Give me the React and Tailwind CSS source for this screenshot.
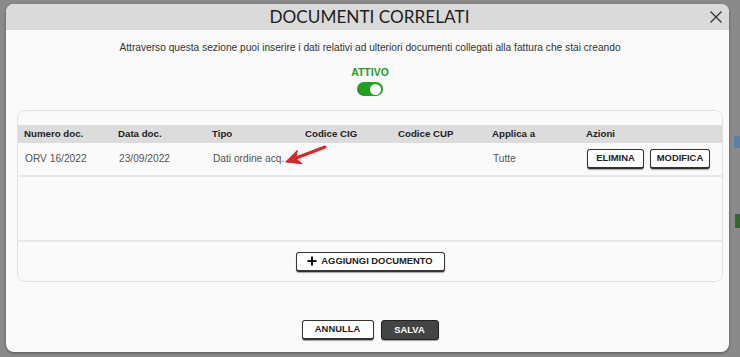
import React, { useState } from 'react';

const cols = ['Numero doc.', 'Data doc.', 'Tipo', 'Codice CIG', 'Codice CUP', 'Applica a', 'Azioni'];

const Btn = ({ children, className = '' }) => (
  <button
    className={`h-[20px] whitespace-nowrap rounded-[3px] border border-[#333] border-b-2 bg-white px-1 text-[9.4px] font-bold text-[#222] shadow-[0_1px_1px_rgba(0,0,0,0.35)] ${className}`}
  >
    {children}
  </button>
);

const App = () => {
  const [active, setActive] = useState(true);

  return (
    <div
      className="relative h-[357px] w-[740px] overflow-hidden bg-[#8a8a8a] pl-[6px] pt-[4px]"
      style={{ fontFamily: '"Liberation Sans", Arial, sans-serif' }}
    >
      {/* page fragments behind the overlay */}
      <div className="absolute right-0 top-[136px] h-[12px] w-[6px] bg-[#5d7fa6]" />
      <div className="absolute right-0 top-[214px] h-[14px] w-[5px] bg-[#2d6b2d]" />

      <div className="flex h-[348px] w-[723px] flex-col overflow-hidden rounded-[8px] bg-[#fafafa] shadow-[0_1px_3px_rgba(0,0,0,0.4)]">
        {/* header */}
        <div className="relative flex h-[26px] shrink-0 items-center justify-center bg-[#dadada]">
          <h1
            className="pl-[4px] text-[17.2px] leading-none text-[#1e1e1e]"
            style={{ fontFamily: 'Lato, "Open Sans", sans-serif' }}
          >
            DOCUMENTI CORRELATI
          </h1>
          <svg className="absolute right-[6px] top-[6px] h-[14px] w-[14px]" viewBox="0 0 14 14" fill="none" stroke="#333" strokeWidth="1.3">
            <path d="M1.5 1.5 L12.5 12.5 M12.5 1.5 L1.5 12.5" />
          </svg>
        </div>

        {/* body */}
        <div className="flex flex-1 flex-col pl-[11px] pr-[6px]">
          <p className="mt-[11px] text-center text-[10.2px] leading-[14px] text-[#333]">
            Attraverso questa sezione puoi inserire i dati relativi ad ulteriori documenti collegati alla fattura che stai creando
          </p>

          <div className="mt-[11px] flex flex-col items-center">
            <span className="text-[10.5px] font-bold leading-[13px] text-[#1e9e1e]">ATTIVO</span>
            <button
              onClick={() => setActive(!active)}
              className={`mt-[3px] flex h-[14px] w-[26px] items-center rounded-full px-[2px] ${active ? 'justify-end bg-[#1ea01e]' : 'justify-start bg-[#bbb]'}`}
            >
              <span className="h-[11px] w-[11px] rounded-full bg-white" />
            </button>
          </div>

          {/* table panel */}
          <div className="mt-[14px] flex h-[172px] flex-col rounded-[8px] border border-[#e2e2e2] bg-[#fafafa]">
            <div className="h-[14px]" />
            <div className="grid h-[18px] grid-cols-[94px_94px_93px_93px_94px_94px_1fr] items-center bg-[#dcdcdc] pl-[6px] text-[9.7px] font-bold text-[#222]">
              {cols.map((c) => (
                <span key={c}>{c}</span>
              ))}
            </div>
            <div className="relative grid h-[34px] grid-cols-[94px_94px_93px_93px_94px_94px_1fr] items-center border-b-2 border-[#e8e8e8] pl-[7px] text-[10.2px] text-[#555]">
              <span>ORV 16/2022</span>
              <span>23/09/2022</span>
              <span>Dati ordine acq.</span>
              <span />
              <span />
              <span>Tutte</span>
              <span className="flex gap-[6px]">
                <Btn className="w-[57px]">ELIMINA</Btn>
                <Btn className="w-[60px]">MODIFICA</Btn>
              </span>
              {/* red annotation arrow */}
              <svg className="absolute left-[264px] top-[1px] h-[24px] w-[46px]" viewBox="0 0 46 24" fill="none">
                <path d="M43 3 L14 14" stroke="#d62828" strokeWidth="3" strokeLinecap="round" />
                <path d="M4 18 L15.3 6.6 L13.5 14.5 L19.7 19.6 Z" fill="#d62828" stroke="#d62828" strokeWidth="1.2" strokeLinejoin="round" />
              </svg>
            </div>
            <div className="flex-1 border-b-2 border-[#e8e8e8]" />
            <div className="flex h-[39px] items-center justify-center">
              <Btn className="flex w-[149px] items-center justify-center gap-[4px]">
                <svg className="h-[10px] w-[10px]" viewBox="0 0 10 10">
                  <path d="M5 0.5 V9.5 M0.5 5 H9.5" stroke="#111" strokeWidth="2" />
                </svg>
                AGGIUNGI DOCUMENTO
              </Btn>
            </div>
          </div>

          {/* footer */}
          <div className="mt-[38px] flex justify-center gap-[7px]">
            <Btn className="w-[72px]">ANNULLA</Btn>
            <button className="h-[20px] w-[58px] rounded-[3px] border border-[#222] bg-[#444] text-[9.4px] font-bold text-white shadow-[0_1px_1px_rgba(0,0,0,0.35)]">
              SALVA
            </button>
          </div>
        </div>
      </div>
    </div>
  );
};

export default App;
